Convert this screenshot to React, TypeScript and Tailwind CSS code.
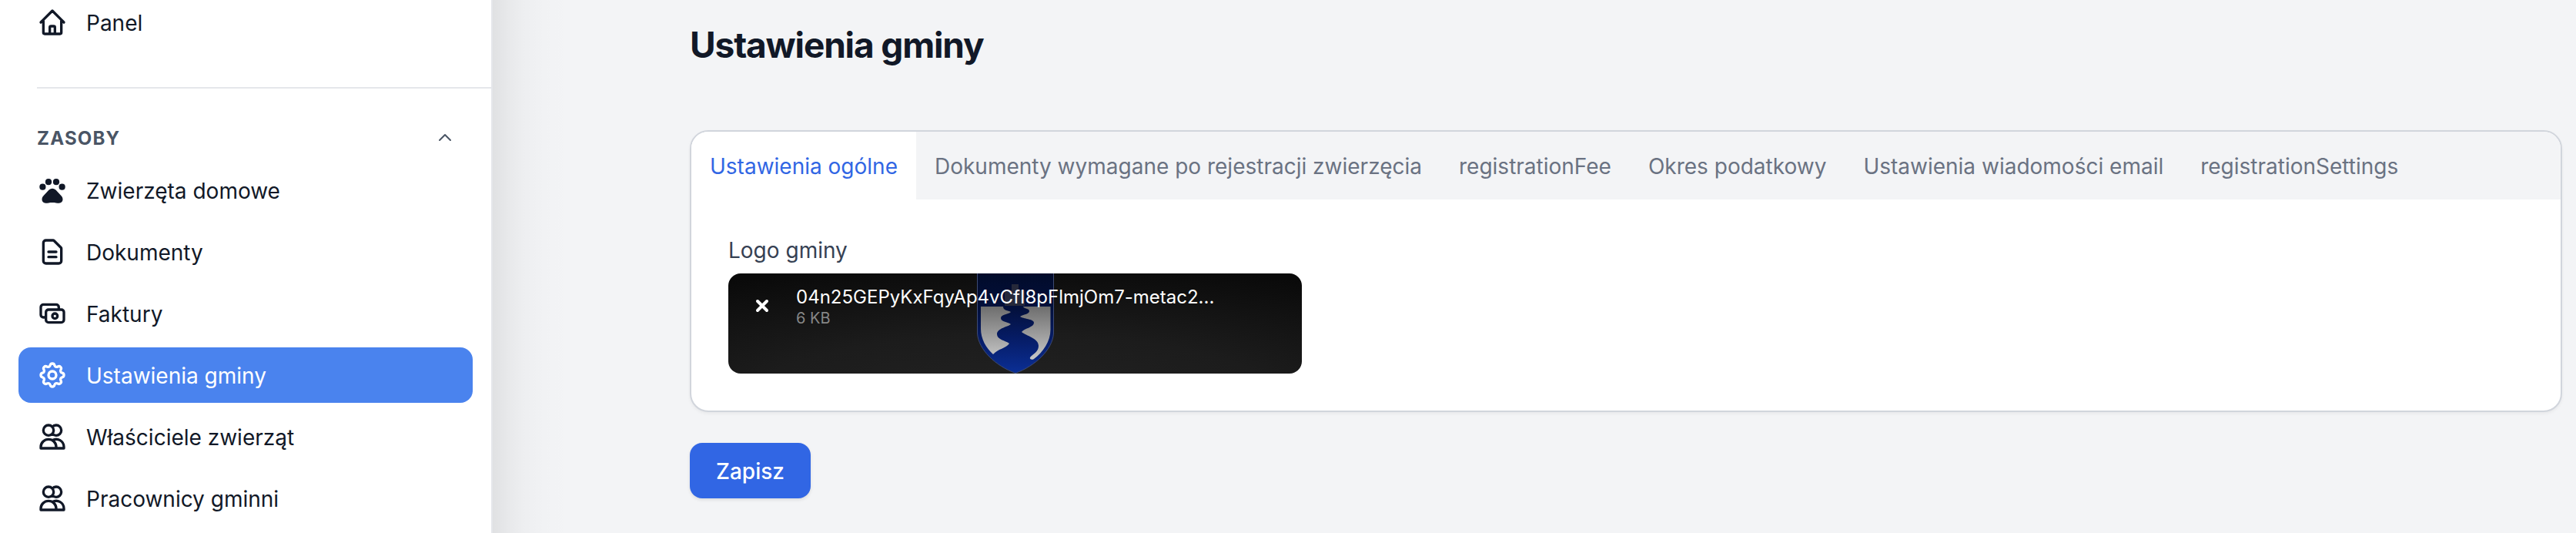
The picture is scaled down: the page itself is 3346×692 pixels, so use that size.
import React, { useState } from "react";

const ICONS = {
  home: "M3 12l2-2m0 0l7-7 7 7M5 10v10a1 1 0 001 1h3m10-11l2 2m-2-2v10a1 1 0 01-1 1h-3m-6 0a1 1 0 001-1v-4a1 1 0 011-1h2a1 1 0 011 1v4a1 1 0 001 1m-6 0h6",
  document:
    "M9 12h6m-6 4h6m2 5H7a2 2 0 01-2-2V5a2 2 0 012-2h5.586a1 1 0 01.707.293l5.414 5.414a1 1 0 01.293.707V19a2 2 0 01-2 2z",
  cash: "M17 9V7a2 2 0 00-2-2H5a2 2 0 00-2 2v6a2 2 0 002 2h2m2 4h10a2 2 0 002-2v-6a2 2 0 00-2-2H9a2 2 0 00-2 2v6a2 2 0 002 2zm7-5a2 2 0 11-4 0 2 2 0 014 0z",
  cog: "M10.325 4.317c.426-1.756 2.924-1.756 3.35 0a1.724 1.724 0 002.573 1.066c1.543-.94 3.31.826 2.37 2.37a1.724 1.724 0 001.065 2.572c1.756.426 1.756 2.924 0 3.35a1.724 1.724 0 00-1.066 2.573c.94 1.543-.826 3.31-2.37 2.37a1.724 1.724 0 00-2.572 1.065c-.426 1.756-2.924 1.756-3.35 0a1.724 1.724 0 00-2.573-1.066c-1.543.94-3.31-.826-2.37-2.37a1.724 1.724 0 00-1.065-2.572c-1.756-.426-1.756-2.924 0-3.35a1.724 1.724 0 001.066-2.573c-.94-1.543.826-3.31 2.37-2.37.996.608 2.296.07 2.572-1.065z M15 12a3 3 0 11-6 0 3 3 0 016 0z",
  users:
    "M12 4.354a4 4 0 110 5.292M15 21H3v-1a6 6 0 0112 0v1zm0 0h6v-1a6 6 0 00-9-5.197M13 7a4 4 0 11-8 0 4 4 0 018 0z",
};

function OutlineIcon({ d }: { d: string }) {
  return (
    <svg
      className="size-10 shrink-0"
      viewBox="0 0 24 24"
      fill="none"
      stroke="currentColor"
      strokeWidth="2"
      strokeLinecap="round"
      strokeLinejoin="round"
      aria-hidden="true"
    >
      <path d={d} />
    </svg>
  );
}

function PawIcon() {
  return (
    <svg className="size-10 shrink-0" viewBox="0 0 40 40" fill="currentColor" aria-hidden="true">
      <circle cx="7.4" cy="15.7" r="4.1" />
      <circle cx="15" cy="9.2" r="4.1" />
      <circle cx="25" cy="9.2" r="4.1" />
      <circle cx="32.6" cy="15.7" r="4.1" />
      <path d="M15.6 19.6Q20 15.8 24.4 19.6L31.6 27.2C35.2 31.2 33.4 36.8 28.6 36.8C26 36.8 24 36 20 36C16 36 14 36.8 11.4 36.8C6.6 36.8 4.8 31.2 8.4 27.2Z" />
    </svg>
  );
}

function NavLink({
  icon,
  label,
  active = false,
}: {
  icon: React.ReactNode;
  label: string;
  active?: boolean;
}) {
  return (
    <a
      href="#"
      aria-current={active ? "page" : undefined}
      className={
        active
          ? "flex h-18 items-center gap-6 rounded-2xl bg-[#4a83ee] px-6 text-white"
          : "flex h-18 items-center gap-6 rounded-2xl px-6 text-[#111827]"
      }
    >
      {icon}
      <span className="pt-0.5">{label}</span>
    </a>
  );
}

function Sidebar() {
  return (
    <aside className="w-160 shrink-0 border-r-2 border-gray-200 bg-white">
      <nav>
        <div className="flex h-[65px] items-end overflow-hidden px-6 text-[#111827]">
          <div className="w-full">
            <NavLink icon={<OutlineIcon d={ICONS.home} />} label="Panel" />
          </div>
        </div>
        <hr className="mt-12 ml-12 border-t-2 border-gray-200" />
        <button
          type="button"
          aria-expanded="true"
          className="mt-12 flex h-8 w-full items-center justify-between px-12 text-[24px] leading-8 font-bold tracking-wider text-gray-600 uppercase"
        >
          <span className="pt-0.5">Zasoby</span>
          <svg
            className="size-6"
            viewBox="0 0 24 24"
            fill="none"
            stroke="currentColor"
            strokeWidth="2"
            strokeLinecap="round"
            strokeLinejoin="round"
            aria-hidden="true"
          >
            <path d="M5 15l7-7 7 7" />
          </svg>
        </button>
        <div className="mt-4 flex flex-col gap-2 px-6">
          <NavLink icon={<PawIcon />} label="Zwierzęta domowe" />
          <NavLink icon={<OutlineIcon d={ICONS.document} />} label="Dokumenty" />
          <NavLink icon={<OutlineIcon d={ICONS.cash} />} label="Faktury" />
          <NavLink icon={<OutlineIcon d={ICONS.cog} />} label="Ustawienia gminy" active />
          <NavLink icon={<OutlineIcon d={ICONS.users} />} label="Właściciele zwierząt" />
          <NavLink icon={<OutlineIcon d={ICONS.users} />} label="Pracownicy gminni" />
        </div>
      </nav>
    </aside>
  );
}

function Crest() {
  return (
    <svg
      className="absolute inset-y-0 left-1/2 h-full w-[100px] -translate-x-1/2"
      viewBox="0 0 100 130"
      aria-hidden="true"
    >
      <defs>
        <linearGradient id="crest-blue" x1="0" y1="0" x2="0" y2="130" gradientUnits="userSpaceOnUse">
          <stop offset="0" stopColor="#010b2a" />
          <stop offset="0.35" stopColor="#03103c" />
          <stop offset="0.65" stopColor="#061c66" />
          <stop offset="1" stopColor="#0b2f96" />
        </linearGradient>
        <linearGradient id="crest-silver" x1="0" y1="42" x2="0" y2="112" gradientUnits="userSpaceOnUse">
          <stop offset="0" stopColor="#6c6c6c" />
          <stop offset="0.5" stopColor="#9a9a9a" />
          <stop offset="1" stopColor="#c8c8c8" />
        </linearGradient>
      </defs>
      <path
        d="M.5 -2V78C2 99 24 120 50 129.5C76 120 98 99 99.5 78V-2Z"
        fill="url(#crest-blue)"
        stroke="#3d4a72"
        strokeWidth="1"
      />
      <path d="M45 14h9v8h8v20H36V22h9z" fill="#26293a" />
      <path
        d="M5 43H34C34 48 40 48 44 50C42 53 31 53 31 58C31 63 41 63 44 66C41 69 26 71 26 79C26 86 37 87 42 91C38 97 27 98 21 105C12 97 5 85 5 72Z"
        fill="url(#crest-silver)"
      />
      <path
        d="M95.500 43H60C61 46 68 45 68 49C68 53 60 53 56 56C60 59 74 59 74 64C74 70 62 71 58 76C64 81 80 84 80 94C80 102 73 104 69 109C68 111 71 113 74 111C86 102 95.500 88 95.500 73Z"
        fill="url(#crest-silver)"
      />
    </svg>
  );
}

function LogoUpload() {
  return (
    <div className="relative flex h-[130px] w-[745px] items-start overflow-hidden rounded-2xl bg-[radial-gradient(ellipse_100%_130%_at_50%_120%,#222222_0%,#1c1c1c_45%,#0a0a0a_100%)]">
      <Crest />
      <button
        type="button"
        aria-label="Usuń plik"
        className="relative mt-4 ml-[18px] flex size-[52px] items-center justify-center rounded-full text-white"
      >
        <svg
          className="size-5"
          viewBox="0 0 20 20"
          fill="none"
          stroke="currentColor"
          strokeWidth="4"
          strokeLinecap="round"
          aria-hidden="true"
        >
          <path d="M4 4l12 12M16 4L4 16" />
        </svg>
      </button>
      <div className="relative mt-4 ml-[18px] min-w-0 text-white">
        <div className="truncate text-[24px] leading-[30px]">04n25GEPyKxFqyAp4vCfI8pFlmjOm7-metac2...</div>
        <div className="text-[20px] leading-6 text-[#868686]">6 KB</div>
      </div>
    </div>
  );
}

const TABS = [
  "Ustawienia ogólne",
  "Dokumenty wymagane po rejestracji zwierzęcia",
  "registrationFee",
  "Okres podatkowy",
  "Ustawienia wiadomości email",
  "registrationSettings",
];

export default function App() {
  const [tab, setTab] = useState(0);
  return (
    <div className="flex h-screen overflow-hidden bg-gray-100 font-['Inter',sans-serif] text-[28px] leading-10">
      <Sidebar />
      <main className="min-w-0 flex-1 bg-[linear-gradient(to_right,rgb(0_0_0/0.08)_0px,rgb(0_0_0/0.047)_20px,rgb(0_0_0/0.025)_40px,rgb(0_0_0/0.011)_60px,rgb(0_0_0/0.004)_80px,transparent_104px)] pr-[18px] pl-64">
        <h1 className="pt-[26px] text-[46px] leading-16 font-bold tracking-tight text-[#111827]">Ustawienia gminy</h1>
        <form className="mt-[79px]" onSubmit={(e) => e.preventDefault()}>
          <section className="overflow-hidden rounded-3xl border-2 border-gray-300 bg-white shadow-[0_2px_4px_rgb(0_0_0/0.05)]">
            <div role="tablist" className="flex bg-gray-100">
              {TABS.map((name, i) => (
                <button
                  key={name}
                  type="button"
                  role="tab"
                  aria-selected={i === tab}
                  onClick={() => setTab(i)}
                  className={
                    i === tab
                      ? "h-22 bg-white px-6 pt-0.5 whitespace-nowrap text-[#3166e4]"
                      : "h-22 px-6 pt-0.5 whitespace-nowrap text-gray-500"
                  }
                >
                  {name}
                </button>
              ))}
            </div>
            <div role="tabpanel" className="px-12 pt-[46px] pb-12">
              <div className="mb-2.5 text-gray-700">Logo gminy</div>
              <LogoUpload />
            </div>
          </section>
          <button
            type="submit"
            className="mt-10 h-18 rounded-2xl bg-[#3166e4] px-[34px] pt-0.5 font-medium text-white shadow-[0_2px_4px_rgb(0_0_0/0.1)]"
          >
            Zapisz
          </button>
        </form>
      </main>
    </div>
  );
}
